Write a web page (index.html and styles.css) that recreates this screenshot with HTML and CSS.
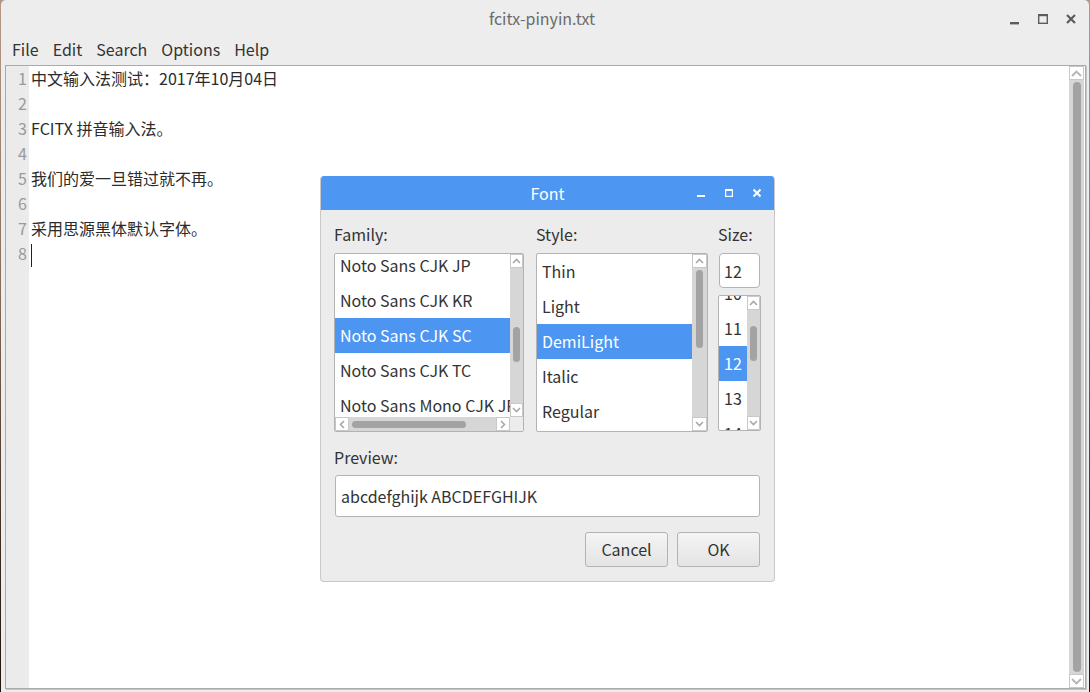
FILE: index.html
```html
<!DOCTYPE html>
<html>
<head>
<meta charset="utf-8">
<link rel="stylesheet" href="styles.css">
</head>
<body>
<div class="window">
  <div class="titlebar">
    <div></div>
    <div class="title">fcitx-pinyin.txt</div>
    <div class="wctl">
      <svg width="12" height="12" viewBox="0 0 12 12"><rect x="1" y="9" width="9" height="2.4" fill="#5c5c5c"/></svg>
      <svg width="12" height="12" viewBox="0 0 12 12"><rect x="1.7" y="1.7" width="8.6" height="8.6" fill="none" stroke="#5c5c5c" stroke-width="1.4"/><rect x="1" y="1" width="10" height="2.2" fill="#5c5c5c"/></svg>
      <svg width="12" height="12" viewBox="0 0 12 12"><path d="M2 2L10 10M10 2L2 10" stroke="#5c5c5c" stroke-width="2.2"/></svg>
    </div>
  </div>
  <div class="menubar">
    <span>File</span><span>Edit</span><span>Search</span><span>Options</span><span>Help</span>
  </div>
  <div class="editor">
    <div class="gutter">
      <div>1</div><div>2</div><div>3</div><div>4</div><div>5</div><div>6</div><div>7</div><div>8</div>
    </div>
    <div class="text">
      <div>中文输入法测试：2017年10月04日</div>
      <div></div>
      <div>FCITX 拼音输入法。</div>
      <div></div>
      <div>我们的爱一旦错过就不再。</div>
      <div></div>
      <div>采用思源黑体默认字体。</div>
      <div><span class="caret"></span></div>
    </div>
    <div class="vscroll main-vs">
      <div class="arrow"><svg width="11" height="7" viewBox="0 0 11 7"><path d="M1 6L5.5 1.5L10 6" fill="none" stroke="#b5b5b5" stroke-width="1.8"/></svg></div>
      <div class="track"><div class="thumb"></div></div>
      <div class="arrow"><svg width="11" height="7" viewBox="0 0 11 7"><path d="M1 1L5.5 5.5L10 1" fill="none" stroke="#b5b5b5" stroke-width="1.8"/></svg></div>
    </div>
  </div>
</div>

<div class="dialog">
  <div class="dtitle">
    <div></div>
    <div class="dname">Font</div>
    <div class="dctl">
      <svg width="10" height="10" viewBox="0 0 10 10"><rect x="1" y="7" width="8" height="2" fill="#fff"/></svg>
      <svg width="10" height="10" viewBox="0 0 10 10"><rect x="1.6" y="1.6" width="6.8" height="6.8" fill="none" stroke="#fff" stroke-width="1.2"/><rect x="1" y="1" width="8" height="2" fill="#fff"/></svg>
      <svg width="10" height="10" viewBox="0 0 10 10"><path d="M1.5 1.5L8.5 8.5M8.5 1.5L1.5 8.5" stroke="#fff" stroke-width="2"/></svg>
    </div>
  </div>
  <div class="dbody">
    <div class="cols">
      <div class="col fam-col">
        <div class="label">Family:</div>
        <div class="list fam">
          <div class="items fam-items">
            <div class="item">Noto Sans CJK JP</div>
            <div class="item">Noto Sans CJK KR</div>
            <div class="item sel">Noto Sans CJK SC</div>
            <div class="item">Noto Sans CJK TC</div>
            <div class="item">Noto Sans Mono CJK JP</div>
          </div>
          <div class="vscroll small">
            <div class="arrow"><svg width="9" height="6" viewBox="0 0 9 6"><path d="M1 5L4.5 1.5L8 5" fill="none" stroke="#a8a8a8" stroke-width="1.6"/></svg></div>
            <div class="track"><div class="thumb fam-thumb"></div></div>
            <div class="arrow"><svg width="9" height="6" viewBox="0 0 9 6"><path d="M1 1L4.5 4.5L8 1" fill="none" stroke="#a8a8a8" stroke-width="1.6"/></svg></div>
          </div>
          <div class="hscroll">
            <div class="harrow"><svg width="6" height="9" viewBox="0 0 6 9"><path d="M5 1L1.5 4.5L5 8" fill="none" stroke="#a8a8a8" stroke-width="1.6"/></svg></div>
            <div class="htrack"><div class="hthumb"></div></div>
            <div class="harrow"><svg width="6" height="9" viewBox="0 0 6 9"><path d="M1 1L4.5 4.5L1 8" fill="none" stroke="#a8a8a8" stroke-width="1.6"/></svg></div>
          </div>
          <div class="corner"></div>
        </div>
      </div>
      <div class="col sty-col">
        <div class="label">Style:</div>
        <div class="list sty">
          <div class="items">
            <div class="item">Thin</div>
            <div class="item">Light</div>
            <div class="item sel">DemiLight</div>
            <div class="item">Italic</div>
            <div class="item">Regular</div>
          </div>
          <div class="vscroll small">
            <div class="arrow"><svg width="9" height="6" viewBox="0 0 9 6"><path d="M1 5L4.5 1.5L8 5" fill="none" stroke="#a8a8a8" stroke-width="1.6"/></svg></div>
            <div class="track"><div class="thumb sty-thumb"></div></div>
            <div class="arrow"><svg width="9" height="6" viewBox="0 0 9 6"><path d="M1 1L4.5 4.5L8 1" fill="none" stroke="#a8a8a8" stroke-width="1.6"/></svg></div>
          </div>
        </div>
      </div>
      <div class="col size-col">
        <div class="label">Size:</div>
        <div class="sizebox">12</div>
        <div class="list sizes">
          <div class="items size-items">
            <div class="item">10</div>
            <div class="item">11</div>
            <div class="item sel">12</div>
            <div class="item">13</div>
            <div class="item">14</div>
          </div>
          <div class="vscroll small">
            <div class="arrow"><svg width="9" height="6" viewBox="0 0 9 6"><path d="M1 5L4.5 1.5L8 5" fill="none" stroke="#a8a8a8" stroke-width="1.6"/></svg></div>
            <div class="track"><div class="thumb size-thumb"></div></div>
            <div class="arrow"><svg width="9" height="6" viewBox="0 0 9 6"><path d="M1 1L4.5 4.5L8 1" fill="none" stroke="#a8a8a8" stroke-width="1.6"/></svg></div>
          </div>
        </div>
      </div>
    </div>
    <div class="label preview-label">Preview:</div>
    <div class="preview">abcdefghijk ABCDEFGHIJK</div>
    <div class="buttons">
      <div class="btn">Cancel</div>
      <div class="btn">OK</div>
    </div>
  </div>
</div>
</body>
</html>
```
FILE: styles.css
```css
* { box-sizing: border-box; }
html, body { margin: 0; height: 100%; }
body {
  background: linear-gradient(180deg, #b49a86 0%, #8a6e5a 40%, #3b2a1c 80%, #1c140e 100%);
  font-family: "Noto Sans CJK SC", "Noto Sans", sans-serif;
  color: #333;
  overflow: hidden;
  position: relative;
  width: 1090px;
  height: 692px;
}
.window {
  width: 1088px;
  height: 692px;
  background: #ededed;
  border-radius: 5px 5px 0 0;
  display: flex;
  flex-direction: column;
  margin-left: 1px;
}
.titlebar {
  height: 35px;
  flex: none;
  display: grid;
  grid-template-columns: 1fr auto 1fr;
  align-items: center;
  color: #6b6b6b;
  font-size: 16px;
}
.title { margin-right: 6px; }
.wctl {
  display: flex;
  justify-content: flex-end;
  gap: 16px;
  padding-right: 12px;
  padding-top: 2px;
}
.menubar {
  height: 30px;
  flex: none;
  display: flex;
  align-items: center;
  gap: 14px;
  padding-left: 11px;
  font-size: 16px;
  color: #333;
  padding-bottom: 2px;
}
.editor {
  flex: 1;
  display: flex;
  margin: 0 3px 3px 4px;
  border: 1px solid #aaaaaa;
  background: #fff;
  box-shadow: 1px 1px 0 #c4c4c4;
}
.gutter {
  width: 23px;
  background: #ebebeb;
  color: #9a9a9a;
  font-size: 16px;
  text-align: right;
  padding-right: 2px;
}
.gutter div, .text div { height: 25px; line-height: 25px; }
.text {
  flex: 1;
  padding-left: 2px;
  font-size: 16px;
  color: #2b2b2b;
}
.caret {
  display: inline-block;
  width: 1px;
  height: 23px;
  background: #222;
  vertical-align: middle;
}
.vscroll {
  display: flex;
  flex-direction: column;
  background: #d6d6d6;
}
.main-vs { width: 15px; margin: 0 1px 0 0; }
.vscroll .arrow {
  flex: none;
  height: 14px;
  background: #fff;
  border: 1px solid #c8c8c8;
  display: flex;
  align-items: center;
  justify-content: center;
}
.vscroll .track { flex: 1; display: flex; flex-direction: column; align-items: center; }
.main-vs .thumb {
  width: 8px;
  flex: 1;
  margin: 2px 0 2px;
  background: #a3a3a3;
  border-radius: 4px;
}
.dialog {
  position: absolute;
  left: 320px;
  top: 176px;
  width: 455px;
  height: 406px;
  background: #ececec;
  border: 1px solid #c9c9c9;
  border-top: none;
  border-radius: 4px;
  overflow: hidden;
  display: flex;
  flex-direction: column;
}
.dtitle {
  height: 34px;
  flex: none;
  background: #4d97f3;
  color: #fff;
  display: grid;
  grid-template-columns: 1fr auto 1fr;
  align-items: center;
  font-size: 16px;
}
.dname { padding-bottom: 1px; }
.dctl {
  display: flex;
  justify-content: flex-end;
  gap: 18px;
  padding-right: 12px;
}
.dbody {
  padding: 12px 13px 0 13px;
  display: flex;
  flex-direction: column;
}
.cols { display: flex; }
.col { display: flex; flex-direction: column; flex: none; }
.fam-col { width: 190px; margin-right: 12px; }
.sty-col { width: 172px; margin-right: 10px; }
.size-col { width: 43px; }
.label {
  font-size: 16px;
  color: #333;
  height: 24px;
  line-height: 24px;
  margin-bottom: 7px;
  padding-left: 0;
}
.list {
  height: 179px;
  background: #fff;
  border: 1px solid #b3b3b3;
  border-radius: 2px;
  display: grid;
  overflow: hidden;
}
.fam { grid-template-columns: 1fr 13px; grid-template-rows: 1fr 14px; }
.sty { grid-template-columns: 1fr 15px; }
.sizes { grid-template-columns: 1fr 13px; height: 136px; }
.items { overflow: hidden; min-width: 0; }
.item {
  height: 35px;
  line-height: 35px;
  padding-left: 5px;
  font-size: 16px;
  color: #333;
  white-space: nowrap;
}
.item.sel { background: #4c96f2; color: #fff; }
.fam-items .item:first-child { margin-top: -6px; }
.size-items .item:first-child { margin-top: -20px; }
.size-items .item { padding-left: 5px; }
.vscroll.small .arrow { height: 14px; }
.vscroll.small .thumb {
  width: 7px;
  background: #a3a3a3;
  border-radius: 4px;
}
.fam-thumb { height: 35px; margin-top: 59px; }
.sty-thumb { height: 78px; margin-top: 2px; }
.size-thumb { height: 35px; margin-top: 16px; }
.hscroll {
  display: flex;
  background: #d6d6d6;
}
.harrow {
  width: 14px;
  flex: none;
  background: #fff;
  border: 1px solid #c8c8c8;
  display: flex;
  align-items: center;
  justify-content: center;
}
.htrack { flex: 1; display: flex; align-items: center; }
.hthumb {
  width: 114px;
  height: 7px;
  margin-left: 3px;
  background: #a3a3a3;
  border-radius: 4px;
}
.corner { background: #ececec; }
.sizebox {
  height: 35px;
  width: 41px;
  margin-left: 1px;
  background: #fff;
  border: 1px solid #b3b3b3;
  border-radius: 4px;
  font-size: 16px;
  line-height: 34px;
  padding-left: 4px;
  margin-bottom: 7px;
}
.preview-label { margin-top: 13px; margin-bottom: 6px; }
.preview {
  height: 42px;
  width: 425px;
  margin-left: 1px;
  background: #fff;
  border: 1px solid #b3b3b3;
  border-radius: 3px;
  font-size: 16px;
  line-height: 40px;
  padding-left: 5px;
}
.buttons {
  display: flex;
  justify-content: flex-end;
  gap: 9px;
  margin-top: 15px;
  padding-right: 1px;
}
.btn {
  width: 83px;
  height: 35px;
  border: 1px solid #b3b3b3;
  border-radius: 3px;
  background: linear-gradient(#f4f4f4, #e4e4e4);
  font-size: 16px;
  line-height: 33px;
  text-align: center;
  color: #333;
}
```
